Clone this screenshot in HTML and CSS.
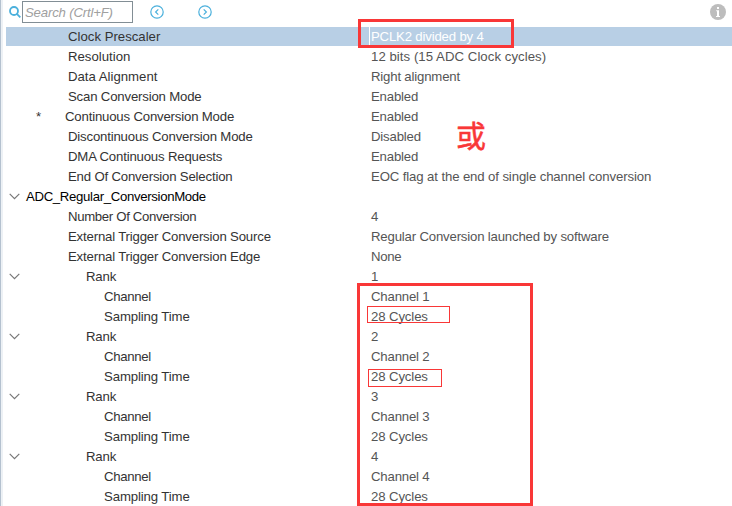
FILE: index.html
```
<!DOCTYPE html>
<html lang="en">
<head>
<meta charset="utf-8">
<title>ADC Parameter Settings</title>
<link rel="stylesheet" href="styles.css">
</head>
<body>
<main class="panel">
  <header class="toolbar">
    <svg class="search-icon" width="12" height="12" viewBox="0 0 12 12"><circle cx="5" cy="5" r="4"/><path d="M7.8 7.8 11.3 11.3"/></svg>
    <div class="search">Search (Crtl+F)</div>
    <svg class="nav-icon prev" width="14" height="14" viewBox="0 0 14 14"><circle cx="7" cy="7" r="6.2"/><path d="M8.3 4.3 5.6 7l2.7 2.7"/></svg>
    <svg class="nav-icon next" width="14" height="14" viewBox="0 0 14 14"><circle cx="7" cy="7" r="6.2"/><path d="M5.7 4.3 8.4 7 5.7 9.7"/></svg>
    <svg class="info-icon" width="16" height="16" viewBox="0 0 16 16"><circle cx="8" cy="8" r="8"/><path d="M7 3h2v2H7zM6.2 6.2H9V12h1v1H6v-1h1V7.2h-.8z"/></svg>
  </header>
  <section class="rows">
    <div class="row selected"><span class="name loose">Clock Prescaler</span><span class="value">PCLK2 divided by 4</span></div>
    <div class="row"><span class="name loose">Resolution</span><span class="value looser">12 bits (15 ADC Clock cycles)</span></div>
    <div class="row"><span class="name loose">Data Alignment</span><span class="value">Right alignment</span></div>
    <div class="row"><span class="name">Scan Conversion Mode</span><span class="value">Enabled</span></div>
    <div class="row"><span class="name starred"><span class="star">*</span>Continuous Conversion Mode</span><span class="value">Enabled</span></div>
    <div class="row"><span class="name">Discontinuous Conversion Mode</span><span class="value">Disabled</span></div>
    <div class="row"><span class="name">DMA Continuous Requests</span><span class="value">Enabled</span></div>
    <div class="row"><span class="name">End Of Conversion Selection</span><span class="value medium">EOC flag at the end of single channel conversion</span></div>
    <div class="row"><span class="name group"><svg class="chevron" width="11" height="7" viewBox="0 0 11 7"><path d="M.7.8 5.5 5.6 10.3.8"/></svg>ADC_Regular_ConversionMode</span></div>
    <div class="row"><span class="name tight">Number Of Conversion</span><span class="value">4</span></div>
    <div class="row"><span class="name">External Trigger Conversion Source</span><span class="value">Regular Conversion launched by software</span></div>
    <div class="row"><span class="name">External Trigger Conversion Edge</span><span class="value tight">None</span></div>
    <div class="row"><span class="name rank"><svg class="chevron" width="11" height="7" viewBox="0 0 11 7"><path d="M.7.8 5.5 5.6 10.3.8"/></svg>Rank</span><span class="value">1</span></div>
    <div class="row"><span class="name child tight">Channel</span><span class="value">Channel 1</span></div>
    <div class="row"><span class="name child medium">Sampling Time</span><span class="value medium">28 Cycles</span></div>
    <div class="row"><span class="name rank"><svg class="chevron" width="11" height="7" viewBox="0 0 11 7"><path d="M.7.8 5.5 5.6 10.3.8"/></svg>Rank</span><span class="value">2</span></div>
    <div class="row"><span class="name child tight">Channel</span><span class="value">Channel 2</span></div>
    <div class="row"><span class="name child medium">Sampling Time</span><span class="value medium">28 Cycles</span></div>
    <div class="row"><span class="name rank"><svg class="chevron" width="11" height="7" viewBox="0 0 11 7"><path d="M.7.8 5.5 5.6 10.3.8"/></svg>Rank</span><span class="value">3</span></div>
    <div class="row"><span class="name child tight">Channel</span><span class="value">Channel 3</span></div>
    <div class="row"><span class="name child medium">Sampling Time</span><span class="value medium">28 Cycles</span></div>
    <div class="row"><span class="name rank"><svg class="chevron" width="11" height="7" viewBox="0 0 11 7"><path d="M.7.8 5.5 5.6 10.3.8"/></svg>Rank</span><span class="value">4</span></div>
    <div class="row"><span class="name child tight">Channel</span><span class="value">Channel 4</span></div>
    <div class="row"><span class="name child medium">Sampling Time</span><span class="value medium">28 Cycles</span></div>
  </section>
  <div class="mark mark-clock"></div>
  <div class="mark mark-ranks"></div>
  <div class="mark mark-first"></div>
  <div class="mark mark-second"></div>
  <div class="note" lang="zh">或</div>
</main>
</body>
</html>
```
FILE: styles.css
```
* { box-sizing: border-box; }
body {
  margin: 0;
  background: #fff;
  font: 13.2px/20px "Liberation Sans", Arial, "Noto Sans CJK SC", sans-serif;
  letter-spacing: -.18px;
  color: #333;
}
.panel {
  position: relative;
  height: 506px;
  overflow: hidden;
  border-left: 1px solid #b4c1cf;
  box-shadow: inset 2px 0 #edf1f5;
}
.toolbar {
  display: flex;
  height: 27px;
  padding: 1px 6px 0 8px;
  align-items: flex-start;
}
.toolbar svg { flex: none; fill: none; stroke: #4bb0dc; }
.search-icon { margin: 5px 1px 0 0; stroke-width: 1.8; }
.search {
  width: 111px;
  height: 22px;
  padding-left: 2px;
  border: 1px solid #828e95;
  font-style: italic;
  line-height: 21px;
  color: #a0a0a0;
  white-space: nowrap;
}
.nav-icon { margin-top: 4px; stroke-width: 1.2; }
.prev { margin-left: 17px; }
.next { margin-left: 34px; }
.toolbar .info-icon { margin: 3px 0 0 auto; stroke: none; }
.info-icon circle { fill: #bdbdbd; }
.info-icon path { fill: #fff; }
.rows { padding-left: 5px; }
.row {
  display: grid;
  grid-template-columns: 363px 1fr;
  height: 20px;
  line-height: 19px;
  white-space: nowrap;
}
.selected { height: 19px; margin-bottom: 1px; background: #b8cfe5; }
.name { display: flex; padding-left: 62px; }
.value { padding-left: 2px; color: #555; }
.selected .value { border-left: 1px solid #fff; padding-left: 1px; color: #fff; }
.starred { padding-left: 30px; }
.star { width: 29px; }
.group, .rank { padding-left: 3px; }
.group { color: #000; letter-spacing: -.33px; }
.chevron {
  margin: 6px 6px 0 0;
  fill: none;
  stroke: #777;
  stroke-width: 1.2;
}
.rank .chevron { margin-right: 66px; }
.child { padding-left: 98px; }
.tight { letter-spacing: -.33px; }
.medium { letter-spacing: -.12px; }
.loose { letter-spacing: 0; }
.looser { letter-spacing: .05px; }
.mark { position: absolute; border: 1px solid #f93737; }
.mark-clock { left: 357px; top: 19px; width: 156px; height: 29px; border-width: 3px; }
.mark-ranks { left: 356px; top: 283px; width: 176px; height: 223px; border-width: 3px; }
.mark-first { left: 366px; top: 306px; width: 83px; height: 17px; }
.mark-second { left: 367px; top: 369px; width: 74px; height: 18px; }
.note {
  position: absolute;
  left: 455px;
  top: 114px;
  font: 400 30px/40px "Noto Sans CJK SC", sans-serif;
  -webkit-text-stroke: .5px #f93737;
  letter-spacing: 0;
  color: #f93737;
}
```
